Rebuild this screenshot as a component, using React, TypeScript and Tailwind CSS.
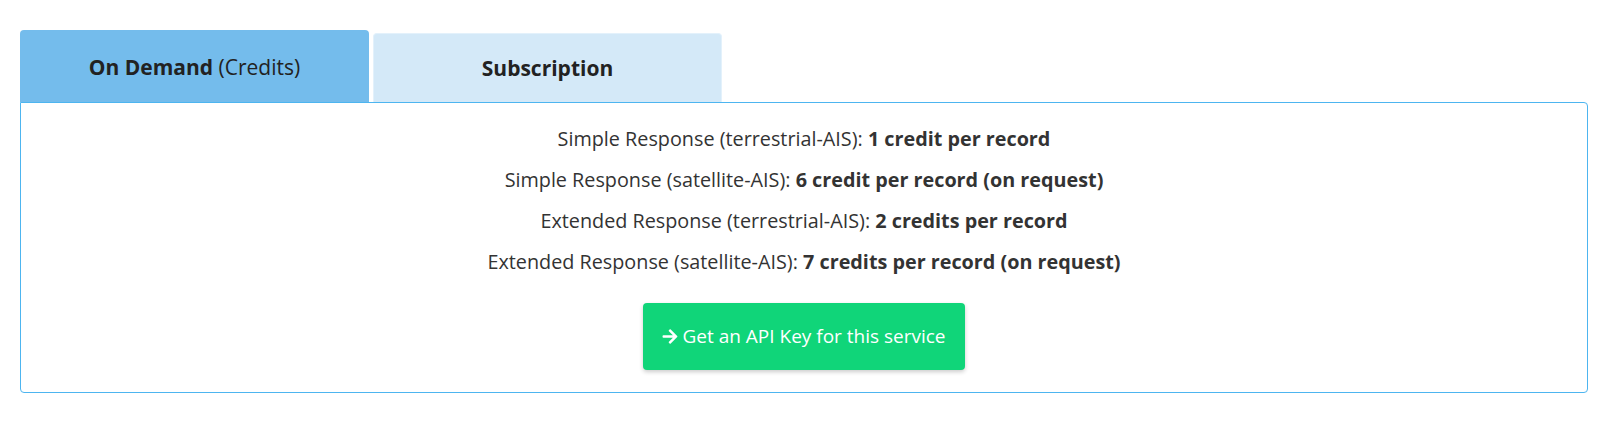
const rows = [
  { label: "Simple Response (terrestrial-AIS):", value: "1 credit per record" },
  { label: "Simple Response (satellite-AIS):", value: "6 credit per record (on request)" },
  { label: "Extended Response (terrestrial-AIS):", value: "2 credits per record" },
  { label: "Extended Response (satellite-AIS):", value: "7 credits per record (on request)" },
];

function ArrowIcon() {
  return (
    <svg width="16" height="17" viewBox="0 0 448 512" fill="currentColor" className="mr-[4px]">
      <path d="M190.5 66.9l22.2-22.2c9.4-9.4 24.6-9.4 33.9 0L441 239c9.4 9.4 9.4 24.6 0 33.9L246.6 467.3c-9.4 9.4-24.6 9.4-33.9 0l-22.2-22.2c-9.5-9.5-9.3-25 .4-34.3L311.4 296H24c-13.3 0-24-10.7-24-24v-32c0-13.3 10.7-24 24-24h287.4L190.9 101.2c-9.8-9.3-10-24.8-.4-34.3z" />
    </svg>
  );
}

export default function App() {
  return (
    <div className="min-h-screen bg-white pt-[30px] pl-[20px] font-['Open_Sans',sans-serif]">
      <div className="w-[1568px]">
        <div className="flex items-end gap-[4px]">
          <button className="h-[72px] w-[349px] rounded-t-[4px] bg-[#74bcec] pt-[4px] text-[21px] text-[#222]">
            <span className="font-bold">On Demand</span> (Credits)
          </button>
          <button className="h-[69px] w-[349px] rounded-t-[4px] border-x border-t border-[#e3f1fb] bg-[#d4e9f8] pt-[1px] text-[21px] font-bold text-[#222]">
            Subscription
          </button>
        </div>
        <div className="rounded-b-[4px] rounded-tr-[4px] border border-[#4db5f0] px-4 pt-[15px] pb-[22px] text-center text-[19.8px] text-[#333]">
          {rows.map((r) => (
            <p key={r.label} className="leading-[41px]">
              {r.label} <span className="font-bold">{r.value}</span>
            </p>
          ))}
          <div className="mt-[21px] flex justify-center">
            <button className="flex h-[67px] w-[322px] items-center justify-center rounded-[4px] bg-[#10d579] text-[19px] font-medium text-white shadow-[0_2px_4px_rgba(0,0,0,0.2)]">
              <ArrowIcon />
              Get an API Key for this service
            </button>
          </div>
        </div>
      </div>
    </div>
  );
}
